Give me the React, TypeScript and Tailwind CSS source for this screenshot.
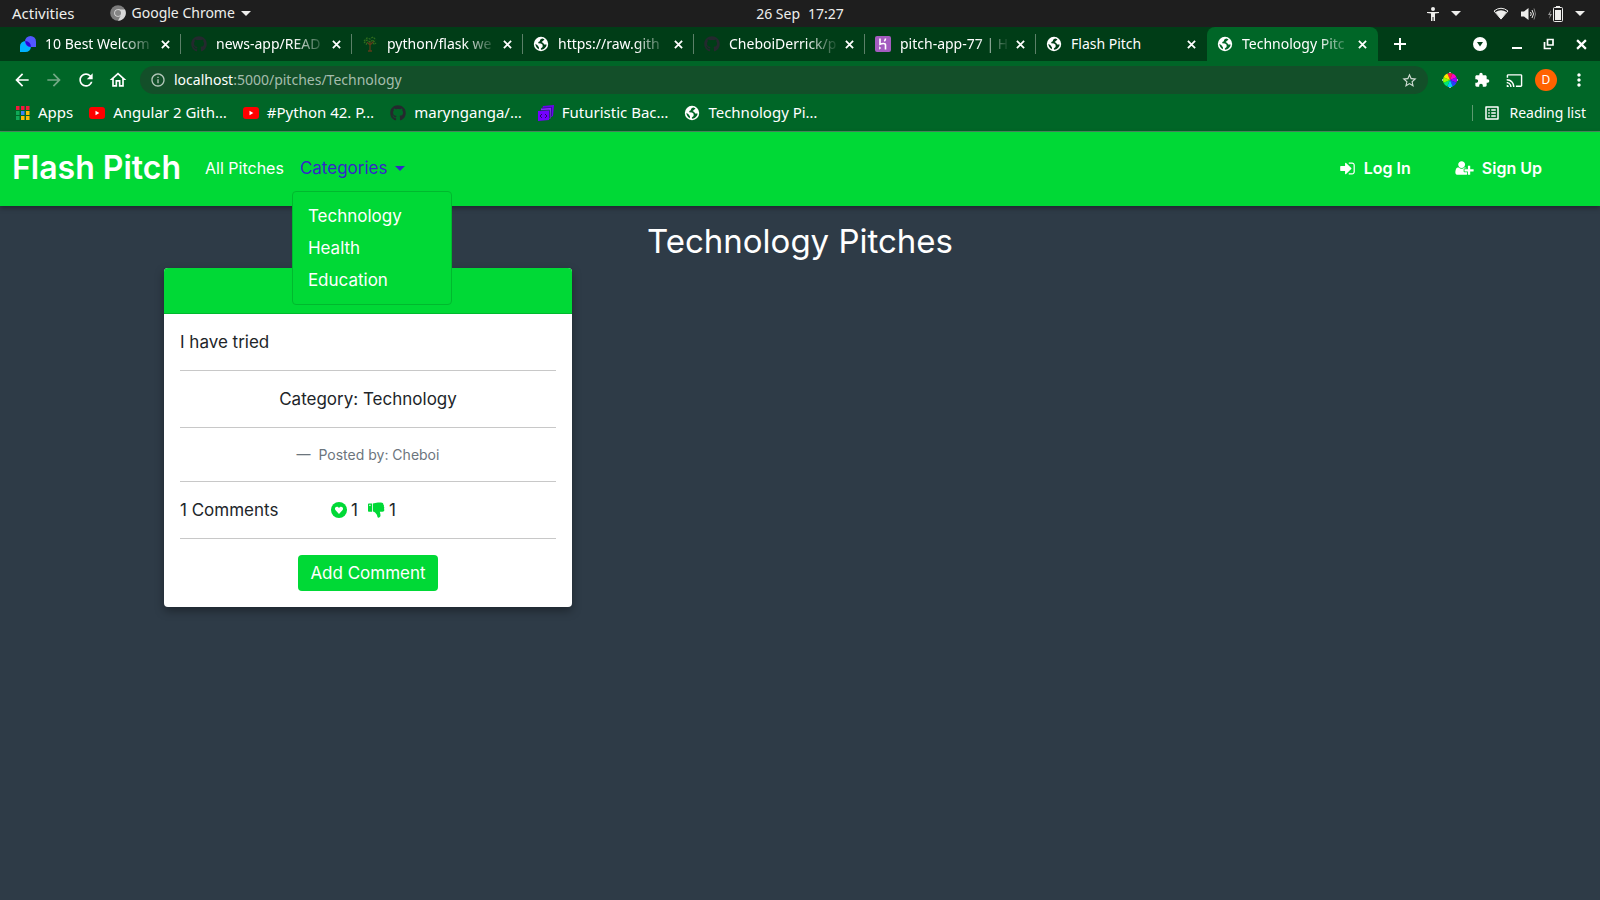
import React from "react";
import { FaGithub } from "react-icons/fa";
import { MdArrowBack, MdArrowForward, MdRefresh, MdOutlineHome, MdInfoOutline, MdStarBorder, MdExtension, MdCast, MdMoreVert, MdListAlt } from "react-icons/md";

const Caret = ({ className = "" }: { className?: string }) => (
  <svg viewBox="0 0 10 5" className={"h-[5px] w-[10px] " + className} aria-hidden="true">
    <path d="M0 0h10L5 5z" fill="currentColor" />
  </svg>
);

const Cross = ({ className = "size-[9px]" }: { className?: string }) => (
  <svg viewBox="0 0 10 10" className={className} aria-hidden="true">
    <path d="M1 1l8 8M9 1l-8 8" stroke="currentColor" strokeWidth="2" />
  </svg>
);

const Globe = ({ bg }: { bg: string }) => (
  <svg viewBox="0 0 16 16" className="size-4 shrink-0" aria-hidden="true">
    <circle cx="8" cy="8" r="7.200" fill="#fff" />
    <path d="M9.200 2.600C7.600 3 6.800 4 6.900 5.200 5.600 5.400 5 6.400 5.200 7.200L8 7.600l1.600 1.200v2.200l-1.800 1.400.2 1.300c3-.1 5.400-2.500 5.600-5.200l-2.400-.1-1-1.500-1.600-.9 1.600-1.200 1.300-1.500zM2.400 7.800l2.300 1.700 1.300 2-.2 1.700C3.800 12.200 2.500 10.300 2.400 7.800z" fill={bg} />
  </svg>
);

const Palm = () => (
  <svg viewBox="0 0 16 16" className="size-4 shrink-0" fill="none" aria-hidden="true">
    <path d="M8 5v10M8 9L5 6M8 9l4-4M6 15h4" stroke="#5b3a1a" strokeWidth="1.300" />
    <path d="M2 5l3-3 3 1 3-2 3 3M2 7l3-3 3 2 3-2 3 4M5 7l-1 2M11 7l2 2" stroke="#2f6d1e" strokeWidth="1.200" strokeDasharray="2 1" />
  </svg>
);

const Blob = () => (
  <svg viewBox="0 0 16 16" className="size-4 shrink-0" aria-hidden="true">
    <path d="M0 16v-5.500A5.500 5.500 0 1 1 5.500 16z" fill="#00b3ff" />
    <path d="M16 5.500A5.500 5.500 0 1 0 10.500 11H16z" fill="#5257ff" />
    <path d="M5.300 5a5.500 5.500 0 0 1 5.600 6 5.500 5.500 0 0 1-5.600-6z" fill="#2a00d8" />
  </svg>
);

const Heroku = () => (
  <svg viewBox="0 0 16 16" className="size-4 shrink-0" aria-hidden="true">
    <rect width="16" height="16" rx="2" fill="#a45cc0" />
    <path d="M5 2.500v5.700c2-.8 5.500-1.300 5.500.8v4.500M10.500 2.500c0 1-.5 2-1.200 2.700" fill="none" stroke="#fff" strokeWidth="1.600" />
    <path d="M4.200 10.300v3.400l1.900-1.700z" fill="#fff" />
  </svg>
);

const YouTube = () => (
  <svg viewBox="0 0 16 16" className="size-4" aria-hidden="true">
    <rect y="2" width="16" height="12" rx="3" fill="#f00" />
    <path d="M6.500 5.800v4.400L10.300 8z" fill="#fff" />
  </svg>
);

const Cubes = () => (
  <svg viewBox="0 0 16 16" className="size-4" aria-hidden="true">
    <path d="M5 1l11-1-1 11-2 1V3L4 4z" fill="#6a00f0" />
    <path d="M3 3.500l10-1-.5 11-1 .5V5.500H3z" fill="#8b2bff" />
    <path d="M0 6l11-.5V15L0 16z" fill="#7400ff" />
    <path d="M4 3.200l9.500-.9V11M2 5.700l9.500-.7V13" stroke="#1c1470" strokeWidth=".6" fill="none" />
    <path d="M4 9l-2 2 2 2M7 9l2 2-2 2" stroke="#2a0a6e" fill="none" />
  </svg>
);

const AppsGrid = () => (
  <svg viewBox="0 0 14 14" className="size-[14px]" aria-hidden="true">
    {["#f2193c", "#f2193c", "#f2193c", "#0fa958", "#3b82f6", "#fbbc05", "#0fa958", "#fbbc05", "#fbbc05"].map((c, i) => (
      <rect key={i} x={(i % 3) * 5} y={Math.floor(i / 3) * 5} width="3.500" height="4" fill={c} />
    ))}
  </svg>
);

const ChromeMono = () => (
  <svg viewBox="0 0 16 16" className="size-4" aria-hidden="true">
    <circle cx="8" cy="8" r="7.800" fill="#7d7d7d" />
    <path d="M8 4.500h7A7.800 7.800 0 0 1 8 15.800l3-5.800z" fill="#d8d8d8" />
    <circle cx="8" cy="8" r="3.800" fill="#ddd" />
    <circle cx="8" cy="8" r="3" fill="#858585" />
  </svg>
);

const ColorWheel = () => (
  <svg viewBox="0 0 16 16" className="size-4" aria-hidden="true">
    {["#ff1744", "#ff00c8", "#9b00ff", "#2a3bff", "#00c8ff", "#00e676", "#8cff00", "#ffe600"].map((c, i) => (
      <path key={c} d="M8 8L5.300 1.500A7 7 0 0 1 10.700 1.500z" fill={c} transform={`rotate(${i * 45} 8 8)`} />
    ))}
    <path d="M7 .5h2M7 15.500h2M.5 7v2M15.500 7v2" stroke="#aaa" />
  </svg>
);

const SignInIcon = () => (
  <svg viewBox="0 0 1792 1792" className="size-[17px]" fill="currentColor" aria-hidden="true">
    <path d="M1312 896q0 26-19 45l-544 544q-19 19-45 19t-45-19-19-45v-288h-448q-26 0-45-19t-19-45v-384q0-26 19-45t45-19h448v-288q0-26 19-45t45-19 45 19l544 544q19 19 19 45zm352-352v704q0 119-84.500 203.500t-203.500 84.500h-320q-13 0-22.500-9.500t-9.500-22.500q0-4-1-20t-.5-26.500 3-23.500 10-19.500 20.500-6.500h320q66 0 113-47t47-113v-704q0-66-47-113t-113-47h-312l-11.500-1-11.500-3-8-5.500-7-9-2-13.500q0-4-1-20t-.5-26.500 3-23.500 10-19.500 20.500-6.500h320q119 0 203.500 84.500t84.500 203.500z" />
  </svg>
);

const UserPlusIcon = () => (
  <svg viewBox="0 0 2048 1792" className="h-4 w-[19px]" fill="currentColor" aria-hidden="true">
    <path d="M704 896q-159 0-271.500-112.500t-112.500-271.500 112.500-271.500 271.500-112.500 271.500 112.500 112.500 271.500-112.500 271.500-271.500 112.500zm960 128h352q13 0 22.500 9.500t9.500 22.500v192q0 13-9.500 22.500t-22.500 9.500h-352v352q0 13-9.500 22.500t-22.500 9.500h-192q-13 0-22.500-9.500t-9.500-22.500v-352h-352q-13 0-22.500-9.500t-9.500-22.500v-192q0-13 9.500-22.500t22.500-9.500h352v-352q0-13 9.500-22.500t22.500-9.500h192q13 0 22.500 9.500t9.500 22.500v352zm-736 224q0 52 38 90t90 38h256v238q-68 50-171 50h-874q-121 0-194-69t-73-190q0-53 3.500-103.500t14-109 26.500-108.500 43-97.500 62-81 85.500-53.500 111.500-20q19 0 39 17 79 61 154.500 91.500t164.500 30.500 164.500-30.500 154.500-91.500q20-17 39-17 132 0 217 96h-223q-52 0-90 38t-38 90v192z" />
  </svg>
);

const HeartCircle = () => (
  <svg viewBox="0 0 16 16" className="size-4" aria-hidden="true">
    <circle cx="8" cy="8" r="8" fill="#00d936" />
    <path d="M8 12L4.600 8.300C3.200 6.600 4.300 4.700 5.900 4.700 7 4.700 7.600 5.300 8 6c.4-.7 1-1.300 2.100-1.300 1.600 0 2.700 1.900 1.300 3.600z" fill="#fff" />
  </svg>
);

const ThumbsDown = () => (
  <svg viewBox="0 0 17 16" className="h-4 w-[17px] text-[#00d936]" fill="currentColor" aria-hidden="true">
    <path fillRule="evenodd" d="M.8 1.500h3.200v8.300H.8q-.8 0-.8-.8V2.300q0-.8.800-.8zM1.300 2.800v1.200h1.200V2.800z" />
    <path d="M4.800 1.600C6.500 1.300 8 .5 10 .5h3c1.600 0 2.400.8 2.300 2 .7.500.8 1.400.5 2.100.6.700.6 1.500.2 2.200.7 1.600.2 2.900-1.500 2.900h-2.700c.3 1.300.7 2.300.7 3.600 0 1.600-.8 2.500-2.300 2.500-1-.6-.9-2.300-1.500-3.300C7.800 11.300 6.500 9.600 4.800 9.500z" />
  </svg>
);

type Tab = { title: string; icon: React.ReactNode; active?: boolean };

const tabs: Tab[] = [
  { title: "10 Best Welcom", icon: <Blob /> },
  { title: "news-app/READ", icon: <FaGithub className="size-4 shrink-0 text-[#24292e]" /> },
  { title: "python/flask we", icon: <Palm /> },
  { title: "https://raw.gith", icon: <Globe bg="#003d17" /> },
  { title: "CheboiDerrick/p", icon: <FaGithub className="size-4 shrink-0 text-[#24292e]" /> },
  { title: "pitch-app-77 | H", icon: <Heroku /> },
  { title: "Flash Pitch", icon: <Globe bg="#003d17" /> },
  { title: "Technology Pitc", icon: <Globe bg="#006627" />, active: true },
];

const bookmarks = [
  { title: "Apps", icon: <AppsGrid /> },
  { title: "Angular 2 Gith…", icon: <YouTube /> },
  { title: "#Python 42. P…", icon: <YouTube /> },
  { title: "marynganga/…", icon: <FaGithub className="size-4 text-[#24292e]" /> },
  { title: "Futuristic Bac…", icon: <Cubes /> },
  { title: "Technology Pi…", icon: <Globe bg="#006627" /> },
];

function SystemBar() {
  return (
    <div className="grid h-[27px] grid-cols-[1fr_auto_1fr] items-center bg-[#1e1e1e] px-3 text-sm text-[#eeeeec]">
      <div className="flex items-center">
        <button className="text-[15px]">Activities</button>
        <button className="ml-[35px] flex items-center gap-[6px]">
          <ChromeMono />
          Google Chrome
          <Caret />
        </button>
      </div>
      <div className="flex gap-2">
        <span>26 Sep</span>
        <span>17:27</span>
      </div>
      <div className="flex items-center justify-end pr-[3px]">
        <svg viewBox="0 0 12 14" className="h-[14px] w-3" fill="currentColor" aria-hidden="true">
          <circle cx="6" cy="2" r="2" />
          <path d="M0 5h12v1L8 6.500V14H6.500V10h-1v4H4V6.500L0 6z" />
        </svg>
        <Caret className="ml-3" />
        <svg viewBox="0 0 16 13" className="ml-8 h-[13px] w-4" aria-hidden="true">
          <path d="M1 4Q8-1.500 15 4L8 12z" fill="none" stroke="currentColor" strokeWidth="1" />
          <path d="M2.500 5Q8 1.500 13.500 5L8 12.500z" fill="currentColor" />
        </svg>
        <svg viewBox="0 0 15 14" className="ml-3 h-[14px] w-[15px]" fill="none" stroke="currentColor" aria-hidden="true">
          <path d="M0 4.500h3L7.500 1v12L3 9.500H0z" fill="currentColor" stroke="none" />
          <path d="M9.500 5q1.500 2 0 4M11 3q3 4 0 8" />
          <path d="M13 1.500q3 5.500 0 11" opacity=".5" />
        </svg>
        <svg viewBox="0 0 15 16" className="ml-3 h-4 w-[15px]" aria-hidden="true">
          <path d="M3 4L0 9h2l-1 4 3-5H2z" fill="#999" />
          <path d="M8 0h4v2H8zM7 4h6v10H7z" fill="currentColor" />
          <rect x="5.500" y="1.500" width="9" height="14" rx="1" fill="none" stroke="currentColor" />
        </svg>
        <Caret className="ml-3" />
      </div>
    </div>
  );
}

function TabStrip() {
  return (
    <div className="flex h-[34px] items-stretch bg-[#003d17] text-white">
      <div className="flex min-w-0 pl-[10px]" role="tablist">
        {tabs.map((t, i) => (
          <div
            key={i}
            className={
              "flex w-[171px] min-w-0 items-center px-[10px] " +
              (t.active ? "rounded-t-lg bg-[#006627]" : i < 6 ? "bg-[linear-gradient(#5c8068,#5c8068)] bg-[length:1px_20px] bg-right bg-no-repeat" : "")
            }
          >
            {t.icon}
            <button
              role="tab"
              aria-selected={!!t.active}
              className={"ml-[9px] min-w-0 flex-1 text-left text-sm whitespace-nowrap " + (t.title === "Flash Pitch" ? "" : "mask-r-from-70%")}
            >
              {t.title}
            </button>
            <button aria-label="Close tab" className="ml-[6px] pr-px"><Cross /></button>
          </div>
        ))}
      </div>
      <button aria-label="New tab" className="ml-4">
        <svg viewBox="0 0 12 12" className="size-3"><path d="M6 0v12M0 6h12" stroke="currentColor" strokeWidth="2" /></svg>
      </button>
      <div className="ml-auto flex items-center gap-5 pr-3">
        <button aria-label="Search tabs" className="mr-1">
          <svg viewBox="0 0 14 14" className="size-[14px]"><circle cx="7" cy="7" r="7" fill="#fff" /><path d="M4 5h6L7 9.500z" fill="#003d17" /></svg>
        </button>
        <button aria-label="Minimize">
          <svg viewBox="0 0 12 12" className="size-3"><path d="M1 10h10" stroke="#fff" strokeWidth="2" /></svg>
        </button>
        <button aria-label="Restore">
          <svg viewBox="0 0 12 12" className="size-3" fill="none" stroke="#fff" strokeWidth="1.700"><path d="M4.500 1.500H10v5.500H4.500zM1.500 4v6.500H8" /></svg>
        </button>
        <button aria-label="Close" className="px-px"><Cross className="size-[11px]" /></button>
      </div>
    </div>
  );
}

function Toolbar() {
  return (
    <div className="flex items-center pt-[5px] pr-[11px] pl-3 text-white">
      <div className="flex items-center gap-3">
        <button aria-label="Back"><MdArrowBack className="size-5" /></button>
        <button aria-label="Forward" className="text-[#73a886]"><MdArrowForward className="size-5" /></button>
        <button aria-label="Reload"><MdRefresh className="size-5" /></button>
        <button aria-label="Home"><MdOutlineHome className="size-5" /></button>
      </div>
      <div className="ml-3 flex h-7 flex-1 items-center rounded-full bg-[#134f29] px-[10px]">
        <MdInfoOutline className="size-4 text-[#b5c8bb]" />
        <a href="#address" className="ml-2 flex-1 text-sm text-[#a5bdad]"><span className="text-white">localhost</span>:5000/pitches/Technology</a>
        <button aria-label="Bookmark this page"><MdStarBorder className="size-[17px] text-[#d0dcd3]" /></button>
      </div>
      <div className="ml-[14px] flex items-center gap-4">
        <button aria-label="Color picker"><ColorWheel /></button>
        <button aria-label="Extensions"><MdExtension className="size-4" /></button>
        <button aria-label="Cast"><MdCast className="size-[17px]" /></button>
        <button aria-label="Profile" className="-mx-1 size-[22px] rounded-full bg-[#ff6200] text-xs">D</button>
        <button aria-label="Menu"><MdMoreVert className="size-5" /></button>
      </div>
    </div>
  );
}

function BookmarksBar() {
  return (
    <div className="flex h-[38px] items-center border-b border-[#4d8a62] pr-[14px] pl-4 text-[15px] text-white">
      <div className="flex items-center gap-4">
        {bookmarks.map((b) => (
          <a key={b.title} href="#bookmark" className="flex items-center gap-2 whitespace-nowrap">
            {b.icon}
            {b.title}
          </a>
        ))}
      </div>
      <div className="ml-auto h-4 border-l border-[#5c9a70]" />
      <button className="flex items-center gap-2 pl-[10px] text-sm">
        <MdListAlt className="size-[18px]" />
        Reading list
      </button>
    </div>
  );
}

function Navbar() {
  return (
    <nav className="relative z-10 flex h-[74px] items-center bg-[#00d936] px-3 pb-[2px] text-[17px] leading-6 text-white shadow-[0_2px_5px_rgba(0,0,0,0.35)]">
      <a href="#home" className="text-[32px] leading-10 font-semibold">Flash Pitch</a>
      <a href="#all" className="ml-6 text-base">All Pitches</a>
      <div className="relative ml-4">
        <button className="flex items-center gap-2 text-[#3526c9]">
          Categories <Caret />
        </button>
        <ul className="absolute top-full -left-2 mt-[11px] w-40 rounded border border-[#00b92e] bg-[#00d936] py-2">
          {["Technology", "Health", "Education"].map((c) => (
            <li key={c}><a href="#category" className="block px-[15px] py-1">{c}</a></li>
          ))}
        </ul>
      </div>
      <div className="ml-auto flex gap-11 pr-[46px] text-base font-semibold">
        <a href="#login" className="flex items-center gap-2"><SignInIcon />Log In</a>
        <a href="#signup" className="flex items-center gap-2"><UserPlusIcon />Sign Up</a>
      </div>
    </nav>
  );
}

function PitchCard() {
  return (
    <article className="w-[408px] overflow-hidden rounded bg-white text-[17px] leading-6 text-[#212529] shadow-[0_4px_10px_rgba(0,0,0,0.35)]">
      <header className="h-[46px] border-b border-[#00b92e] bg-[#00d936]" />
      <div className="flex flex-col gap-4 p-4">
        <p>I have tried</p>
        <hr className="border-[#c8c8c8]" />
        <p className="text-center">Category: Technology</p>
        <hr className="border-[#c8c8c8]" />
        <footer className="text-center text-sm leading-[21px] text-[#6c757d]">—&nbsp; Posted by: Cheboi</footer>
        <hr className="border-[#c8c8c8]" />
        <div className="flex items-center">
          <span className="w-[151px]">1 Comments</span>
          <button className="flex items-center gap-1" aria-label="Upvote"><HeartCircle />1</button>
          <button className="ml-[10px] flex items-center gap-1" aria-label="Downvote"><ThumbsDown />1</button>
        </div>
        <hr className="border-[#c8c8c8]" />
        <button className="h-9 self-center rounded bg-[#00d936] px-3 text-white">Add Comment</button>
      </div>
    </article>
  );
}

export default function App() {
  return (
    <div className="flex min-h-screen flex-col bg-[#2e3b47] font-['Noto_Sans',sans-serif]">
      <header className="bg-[#006627]">
        <SystemBar />
        <TabStrip />
        <Toolbar />
        <BookmarksBar />
      </header>
      <div className="font-['Inter',sans-serif]">
        <Navbar />
        <main>
          <h1 className="pt-[15px] text-center text-[33px] leading-[40px] text-white">Technology Pitches</h1>
          <section className="px-[164px] pt-[7px]">
            <PitchCard />
          </section>
        </main>
      </div>
    </div>
  );
}
